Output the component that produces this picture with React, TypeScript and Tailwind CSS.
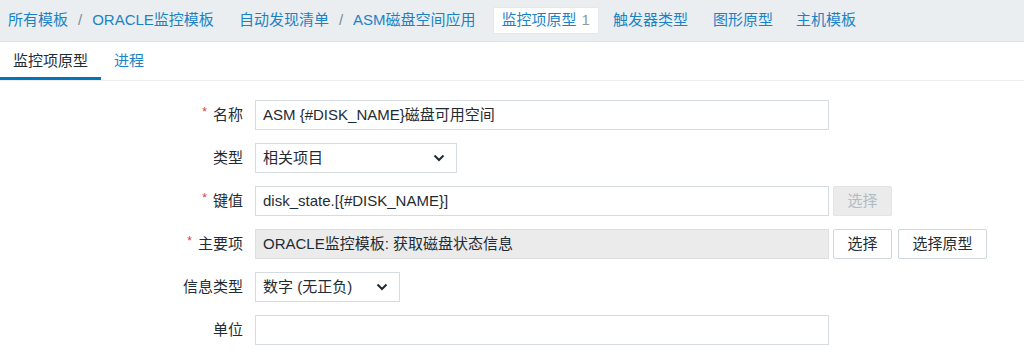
import React from "react"

const font = { fontFamily: '"Liberation Sans", "Noto Sans CJK SC", sans-serif' }

function Chevron() {
  return (
    <svg width="12" height="8" viewBox="0 0 12 8" className="shrink-0">
      <path d="M1.5 1.5 L6 6 L10.5 1.5" fill="none" stroke="#1f2c33" strokeWidth="2" />
    </svg>
  )
}

function Label({ text, required }: { text: string; required?: boolean }) {
  return (
    <div className="w-[243px] flex justify-end items-center gap-[6px] text-[#1f2c33]">
      {required && <span className="text-[#e33734] text-[12px] leading-none -mt-[6px]">*</span>}
      <span>{text}</span>
    </div>
  )
}

function Crumb({ children, className = "" }: { children: React.ReactNode; className?: string }) {
  return <span className={"px-2 text-[#1a83c6] " + className}>{children}</span>
}

export default function App() {
  return (
    <div className="w-[1024px] h-[356px] bg-white overflow-hidden text-[15px]" style={font}>
      {/* header nav */}
      <div className="h-[42px] bg-[#ebeef1] border-b border-[#dde2e6] flex items-center gap-[9px]">
        <div className="flex items-center">
          <Crumb>所有模板</Crumb>
          <span className="px-[2px] text-[#768d99]">/</span>
          <Crumb>ORACLE监控模板</Crumb>
        </div>
        <div className="flex items-center">
          <Crumb>自动发现清单</Crumb>
          <span className="px-[2px] text-[#768d99]">/</span>
          <Crumb>ASM磁盘空间应用</Crumb>
        </div>
        <div className="h-[27px] flex items-center px-2 bg-white rounded-[2px] border border-[#e4e8eb] text-[#1a83c6]">
          监控项原型<span className="ml-[5px] text-[#8a9ba3]">1</span>
        </div>
        <Crumb className="-ml-[3px]">触发器类型</Crumb>
        <Crumb>图形原型</Crumb>
        <Crumb className="-ml-[2px]">主机模板</Crumb>
      </div>

      {/* tabs */}
      <div className="h-[39px] flex border-b border-[#ebeef1]">
        <div className="px-[13px] flex items-center border-b-[3px] border-[#0275b8] text-[#1f2c33] pt-[3px]">监控项原型</div>
        <div className="px-[13px] flex items-center text-[#1a83c6]">进程</div>
      </div>

      {/* form */}
      <div className="pt-[19px] flex flex-col gap-[13px]">
        <div className="flex items-center gap-3 h-[30px]">
          <Label text="名称" required />
          <div className="w-[574px] h-[30px] border border-[#d5dbdf] flex items-center px-[7px] text-[#1f2c33]">
            ASM {"{#DISK_NAME}"}磁盘可用空间
          </div>
        </div>
        <div className="flex items-center gap-3 h-[30px]">
          <Label text="类型" />
          <div className="w-[202px] h-[30px] border border-[#d5dbdf] flex items-center justify-between pl-[7px] pr-[11px] text-[#1f2c33]">
            相关项目
            <Chevron />
          </div>
        </div>
        <div className="flex items-center gap-3 h-[30px]">
          <Label text="键值" required />
          <div className="flex items-center gap-1">
            <div className="w-[574px] h-[30px] border border-[#d5dbdf] flex items-center px-[7px] text-[#1f2c33]">
              disk_state.[{"{#DISK_NAME}"}]
            </div>
            <div className="w-[59px] h-[30px] rounded-[2px] border border-[#e0e4e6] bg-[#ebebeb] flex items-center justify-center text-[#b0bcc2]">
              选择
            </div>
          </div>
        </div>
        <div className="flex items-center gap-3 h-[30px]">
          <Label text="主要项" required />
          <div className="flex items-center">
            <div className="w-[574px] h-[30px] border border-[#dcdfe1] bg-[#ebebeb] flex items-center px-[7px] text-[#1f2c33]">
              ORACLE监控模板: 获取磁盘状态信息
            </div>
            <div className="ml-1 w-[59px] h-[30px] rounded-[2px] border border-[#cfd7db] bg-white flex items-center justify-center text-[#1f2c33]">
              选择
            </div>
            <div className="ml-[6px] w-[89px] h-[30px] rounded-[2px] border border-[#cfd7db] bg-white flex items-center justify-center text-[#1f2c33]">
              选择原型
            </div>
          </div>
        </div>
        <div className="flex items-center gap-3 h-[30px]">
          <Label text="信息类型" />
          <div className="w-[145px] h-[30px] border border-[#d5dbdf] flex items-center justify-between pl-[7px] pr-[11px] text-[#1f2c33]">
            数字 (无正负)
            <Chevron />
          </div>
        </div>
        <div className="flex items-center gap-3 h-[30px]">
          <Label text="单位" />
          <div className="w-[574px] h-[30px] border border-[#d5dbdf]" />
        </div>
      </div>
    </div>
  )
}
